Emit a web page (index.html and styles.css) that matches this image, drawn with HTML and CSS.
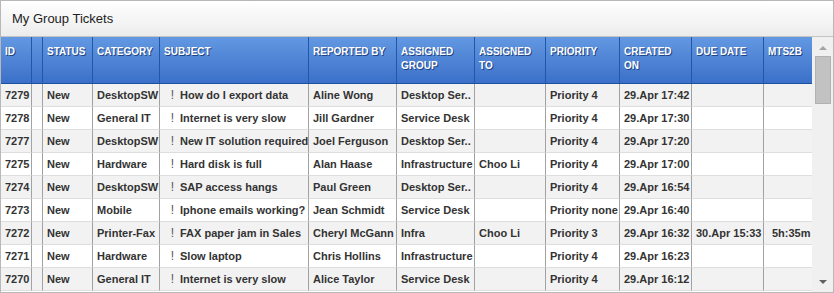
FILE: index.html
```html
<!DOCTYPE html>
<html lang="en">
<head>
    <meta charset="UTF-8">
    <title>My Group Tickets</title>
    <link rel="stylesheet" href="styles.css">
</head>
<body>
    <div class="panel">
        <div class="panel-title">My Group Tickets</div>

        <div class="grid">
            <div class="grid-main">
                <table class="tickets">
                    <colgroup>
                        <col style="width: 31px">
                        <col style="width: 11px">
                        <col style="width: 50px">
                        <col style="width: 67px">
                        <col style="width: 149px">
                        <col style="width: 88px">
                        <col style="width: 78px">
                        <col style="width: 71px">
                        <col style="width: 74px">
                        <col style="width: 72px">
                        <col style="width: 72px">
                        <col style="width: 48px">
                    </colgroup>
                    <thead>
                        <tr>
                            <th>ID</th>
                            <th></th>
                            <th>Status</th>
                            <th>Category</th>
                            <th>Subject</th>
                            <th>Reported by</th>
                            <th>Assigned group</th>
                            <th>Assigned to</th>
                            <th>Priority</th>
                            <th>Created on</th>
                            <th>Due date</th>
                            <th class="last">MTS2B</th>
                        </tr>
                    </thead>
                    <tbody>
                        <tr class="alt">
                            <td>7279</td><td></td><td>New</td><td class="tight">Desktop SW</td>
                            <td class="subject"><span class="flag">!</span>How do I export data</td>
                            <td>Aline Wong</td><td>Desktop Ser..</td><td></td>
                            <td>Priority 4</td><td>29.Apr 17:42</td><td></td><td class="last"></td>
                        </tr>
                        <tr>
                            <td>7278</td><td></td><td>New</td><td>General IT</td>
                            <td class="subject"><span class="flag">!</span>Internet is very slow</td>
                            <td>Jill Gardner</td><td>Service Desk</td><td></td>
                            <td>Priority 4</td><td>29.Apr 17:30</td><td></td><td class="last"></td>
                        </tr>
                        <tr class="alt">
                            <td>7277</td><td></td><td>New</td><td class="tight">Desktop SW</td>
                            <td class="subject"><span class="flag">!</span>New IT solution required</td>
                            <td>Joel Ferguson</td><td>Desktop Ser..</td><td></td>
                            <td>Priority 4</td><td>29.Apr 17:20</td><td></td><td class="last"></td>
                        </tr>
                        <tr>
                            <td>7275</td><td></td><td>New</td><td>Hardware</td>
                            <td class="subject"><span class="flag">!</span>Hard disk is full</td>
                            <td>Alan Haase</td><td>Infrastructure</td><td>Choo Li</td>
                            <td>Priority 4</td><td>29.Apr 17:00</td><td></td><td class="last"></td>
                        </tr>
                        <tr class="alt">
                            <td>7274</td><td></td><td>New</td><td class="tight">Desktop SW</td>
                            <td class="subject"><span class="flag">!</span>SAP access hangs</td>
                            <td>Paul Green</td><td>Desktop Ser..</td><td></td>
                            <td>Priority 4</td><td>29.Apr 16:54</td><td></td><td class="last"></td>
                        </tr>
                        <tr>
                            <td>7273</td><td></td><td>New</td><td>Mobile</td>
                            <td class="subject"><span class="flag">!</span>Iphone emails working?</td>
                            <td>Jean Schmidt</td><td>Service Desk</td><td></td>
                            <td>Priority none</td><td>29.Apr 16:40</td><td></td><td class="last"></td>
                        </tr>
                        <tr class="alt">
                            <td>7272</td><td></td><td>New</td><td>Printer-Fax</td>
                            <td class="subject"><span class="flag">!</span>FAX paper jam in Sales</td>
                            <td>Cheryl McGann</td><td>Infra</td><td>Choo Li</td>
                            <td>Priority 3</td><td>29.Apr 16:32</td><td>30.Apr 15:33</td><td class="last mts">5h:35m</td>
                        </tr>
                        <tr>
                            <td>7271</td><td></td><td>New</td><td>Hardware</td>
                            <td class="subject"><span class="flag">!</span>Slow laptop</td>
                            <td>Chris Hollins</td><td>Infrastructure</td><td></td>
                            <td>Priority 4</td><td>29.Apr 16:23</td><td></td><td class="last"></td>
                        </tr>
                        <tr class="alt">
                            <td>7270</td><td></td><td>New</td><td>General IT</td>
                            <td class="subject"><span class="flag">!</span>Internet is very slow</td>
                            <td>Alice Taylor</td><td>Service Desk</td><td></td>
                            <td>Priority 4</td><td>29.Apr 16:12</td><td></td><td class="last"></td>
                        </tr>
                    </tbody>
                </table>
            </div>

            <div class="scrollbar">
                <div class="arrow-up"></div>
                <div class="thumb"></div>
                <div class="track"></div>
                <div class="arrow-down"></div>
            </div>
        </div>
    </div>
</body>
</html>
```

FILE: styles.css
```css
* {
    margin: 0;
    padding: 0;
    box-sizing: border-box;
}

body {
    font-family: "Liberation Sans", Arial, sans-serif;
    background-color: #fff;
}

/* outer panel */
.panel {
    width: 834px;
    height: 293px;
    border: 1px solid #b8b8b8;
    display: flex;
    flex-direction: column;
    overflow: hidden;
}

.panel-title {
    height: 36px;
    line-height: 35px;
    padding-left: 11px;
    font-size: 13px;
    color: #222;
    background: linear-gradient(#ffffff, #ececec);
    border-bottom: 1px solid #c4c4c4;
}

/* grid + scrollbar */
.grid {
    flex: 1;
    display: flex;
    overflow: hidden;
}

.grid-main {
    width: 811px;
    overflow: hidden;
}

.tickets {
    width: 811px;
    table-layout: fixed;
    border-collapse: separate;
    border-spacing: 0;
}

.tickets th {
    height: 47px;
    padding: 8px 4px 0;
    vertical-align: top;
    text-align: left;
    font-size: 10px;
    line-height: 14px;
    font-weight: bold;
    text-transform: uppercase;
    color: #fff;
    text-shadow: 1px 1px 0 #1f4383;
    background: linear-gradient(#6398e2, #3b70c9);
    border-right: 1px solid #2356a6;
    border-bottom: 1px solid #1d4f9e;
}

.tickets td {
    height: 23px;
    padding: 0 4px;
    font-size: 11px;
    line-height: 14px;
    font-weight: bold;
    color: #333;
    white-space: nowrap;
    overflow: hidden;
    background-color: #fff;
    border-right: 1px solid #a2a2a2;
    border-bottom: 1px solid #dedede;
}

.tickets tr.alt td {
    background-color: #f2f2f2;
}

.tickets .last {
    border-right: none;
}

.tickets td.tight {
    word-spacing: -3px;
}

.tickets td.subject {
    padding-left: 6px;
}

.flag {
    display: inline-block;
    width: 13px;
    margin-right: 1px;
    font-weight: normal;
    font-size: 12px;
    line-height: 14px;
    vertical-align: top;
    color: #555;
    text-align: center;
}

.tickets td.mts {
    padding-left: 8px;
}

/* fake scrollbar */
.scrollbar {
    width: 21px;
    display: flex;
    flex-direction: column;
    align-items: center;
    background-color: #f0f0f0;
}

.arrow-up,
.arrow-down {
    width: 0;
    height: 0;
    border-left: 4px solid transparent;
    border-right: 4px solid transparent;
}

.arrow-up {
    margin-top: 9px;
    border-bottom: 4px solid #a3a3a3;
}

.arrow-down {
    margin-bottom: 8px;
    border-top: 4px solid #606060;
}

.thumb {
    width: 16px;
    height: 48px;
    margin-top: 6px;
    background-color: #c2c2c2;
    border: 1px solid #b2b2b2;
}

.track {
    flex: 1;
}
```
